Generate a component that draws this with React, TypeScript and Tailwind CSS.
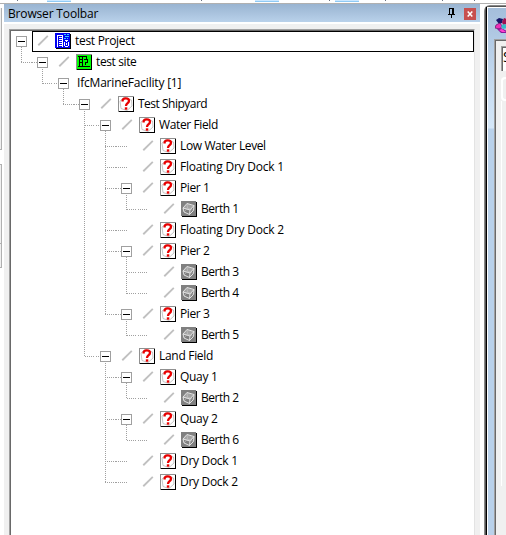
import React from "react";

type IconKind = "project" | "site" | "unknown" | "berth" | "none";

interface Item {
  label: string;
  depth: number;
  icon: IconKind;
  box?: boolean;
  track: string;
}

const T = "tracking-[-0.3px]";
const TIGHT = "tracking-[-0.5px]";
const SNUG = "tracking-[-0.38px]";
const WIDE = "tracking-[-0.22px]";

const items: Item[] = [
  { label: "test Project", depth: 0, icon: "project", box: true, track: T },
  { label: "test site", depth: 1, icon: "site", box: true, track: SNUG },
  { label: "IfcMarineFacility [1]", depth: 2, icon: "none", box: true, track: "tracking-[-0.2px]" },
  { label: "Test Shipyard", depth: 3, icon: "unknown", box: true, track: TIGHT },
  { label: "Water Field", depth: 4, icon: "unknown", box: true, track: SNUG },
  { label: "Low Water Level", depth: 5, icon: "unknown", track: SNUG },
  { label: "Floating Dry Dock 1", depth: 5, icon: "unknown", track: WIDE },
  { label: "Pier 1", depth: 5, icon: "unknown", box: true, track: SNUG },
  { label: "Berth 1", depth: 6, icon: "berth", track: TIGHT },
  { label: "Floating Dry Dock 2", depth: 5, icon: "unknown", track: WIDE },
  { label: "Pier 2", depth: 5, icon: "unknown", box: true, track: SNUG },
  { label: "Berth 3", depth: 6, icon: "berth", track: TIGHT },
  { label: "Berth 4", depth: 6, icon: "berth", track: TIGHT },
  { label: "Pier 3", depth: 5, icon: "unknown", box: true, track: SNUG },
  { label: "Berth 5", depth: 6, icon: "berth", track: TIGHT },
  { label: "Land Field", depth: 4, icon: "unknown", box: true, track: T },
  { label: "Quay 1", depth: 5, icon: "unknown", box: true, track: T },
  { label: "Berth 2", depth: 6, icon: "berth", track: TIGHT },
  { label: "Quay 2", depth: 5, icon: "unknown", box: true, track: T },
  { label: "Berth 6", depth: 6, icon: "berth", track: TIGHT },
  { label: "Dry Dock 1", depth: 5, icon: "unknown", track: T },
  { label: "Dry Dock 2", depth: 5, icon: "unknown", track: T },
];

// True when a later sibling of the node at this depth follows row i.
function continues(i: number, depth: number): boolean {
  for (let j = i + 1; j < items.length; j++) {
    if (items[j].depth < depth) return false;
    if (items[j].depth === depth) return true;
  }
  return false;
}

function Dots({ d, phase }: { d: string; phase: number }) {
  return <path d={d} stroke="#a0a0a0" strokeDasharray="1 1" strokeDashoffset={phase} fill="none" />;
}

function Guides({ index, item }: { index: number; item: Item }) {
  const phase = index % 2;
  const cells = [];
  for (let k = 0; k <= item.depth; k++) {
    const own = k === item.depth;
    const parent = k === item.depth - 1;
    const down = continues(index, k + 1);
    cells.push(
      <svg key={k} width="21" height="21" viewBox="0 0 21 21" className="shrink-0" shapeRendering="crispEdges">
        {!own && (parent || down) && <Dots d={down ? "M10.5 0V21" : "M10.5 0V11"} phase={phase} />}
        {parent && <Dots d="M10 10.5H21" phase={k % 2} />}
        {own && item.depth > 0 && <Dots d={item.box ? "M0 10.5H5" : "M0 10.5H11"} phase={(k + 1) % 2} />}
        {own && item.box && (
          <>
            <path d="M10.5 16V21" stroke="#a0a0a0" strokeDasharray="1 1" strokeDashoffset={phase} />
            <rect x="5.5" y="5.5" width="10" height="10" fill="#fff" stroke="#a0a0a0" />
            <path d="M7 10.5H14" stroke="#000" />
          </>
        )}
      </svg>,
    );
  }
  return <>{cells}</>;
}

function Slash() {
  return (
    <svg width="13" height="13" viewBox="0 0 13 13" className="ml-[5px] shrink-0">
      <path d="M1.300 10.200L10.800 .900" stroke="#c0c0c0" strokeWidth="1.900" />
    </svg>
  );
}

function NodeIcon({ kind }: { kind: IconKind }) {
  if (kind === "project")
    return (
      <svg width="16" height="16" viewBox="0 0 16 16" className="mb-px shrink-0" shapeRendering="crispEdges">
        <path fill="#000" d="M1 1h15v15H1z" />
        <path fill="#0000f0" d="M0 0h15v15H0z" />
        <path stroke="#fff" d="M2.500 2V14M7.500 2V14M2 2.500H8M4 4.500H7M4 6.500H7M4 8.500H7M4 10.500H7M4 12.500H7" />
        <path stroke="#35cfff" d="M9 1.500h2M12 1.500h2M10 3.500h4M9 5.500h2M12 5.500h1" />
        <path stroke="#fff" fill="none" d="M10 7.500H13M9.500 9V13M13.500 9V13M10 13.500H13M11 8.500H12" />
        <path fill="#fff" d="M11 10h1v2h-1z" />
      </svg>
    );
  if (kind === "site")
    return (
      <svg width="16" height="16" viewBox="0 0 16 16" className="mb-px shrink-0" shapeRendering="crispEdges">
        <path fill="#909090" d="M0 0h16v16H0z" />
        <path fill="#000" d="M1 15h14V1h1v15H1z" />
        <path fill="#00ff00" d="M1 1h14v14H1z" />
        <path stroke="#000" fill="none" d="M2 2.500H11M3.500 2V12M6.500 3V12M4 5.500H6M4 8.500H6M2 12.500H14M10.500 3V5" />
        <path stroke="#000" fill="none" d="M8 5.500H12M11.500 6V8M9 8.500H12M9.500 9V11" />
      </svg>
    );
  if (kind === "berth")
    return (
      <svg width="16" height="16" viewBox="0 0 16 16" className="mb-px shrink-0">
        <path fill="#000" d="M1 1h15v15H1z" shapeRendering="crispEdges" />
        <path fill="#808080" d="M0 0h15v15H0z" shapeRendering="crispEdges" />
        <path fill="#a4a4a4" d="M2 7L6 2.500L13 5L9 9Z" />
        <path stroke="#ececec" strokeWidth=".9" fill="none" d="M2 7L6 2.500L13 4.500L9 9ZM2 7L3 11L8.500 13.500L9 9M13 4.500L12.500 9.500L8.500 13.500" />
        <path stroke="#c8c8c8" strokeWidth=".6" fill="none" d="M6 2.500L6.500 7L3 11M6.500 7L12.500 9.500" />
      </svg>
    );
  return (
    <svg width="16" height="16" viewBox="0 0 16 16" className="mb-px shrink-0">
      <g shapeRendering="crispEdges">
        <path fill="#909090" d="M0 0h16v16H0z" />
        <path fill="#000" d="M1 15h14V1h1v15H1z" />
        <path fill="#fff" d="M1 1h14v14H1z" />
      </g>
      <path stroke="#b8b8b8" strokeWidth=".8" fill="none" d="M2 5L6 1.500L13.500 4L14 10L9 14.500L3 12.500Z" />
      <path stroke="#e80000" strokeWidth="2.300" fill="none" d="M4.600 5.500V4.300Q5 2.300 7.800 2.300Q11 2.300 11 4.800Q11 6.300 9.500 7.200Q8 8.200 8 10.100" />
      <path fill="#e80000" d="M6.800 11.300h2.500v2.400H6.800z" />
    </svg>
  );
}

function TreeRow({ item, index }: { item: Item; index: number }) {
  const body = (
    <>
      {item.icon !== "none" && (
        <>
          <Slash />
          <span className="w-[5px] shrink-0" />
          <NodeIcon kind={item.icon} />
        </>
      )}
      <span className={`mb-[2px] whitespace-pre ${item.icon === "none" ? "ml-[3px]" : "ml-[4px]"} ${item.track}`}>{item.label}</span>
    </>
  );
  return (
    <div className="flex h-[21px] shrink-0 items-center">
      <Guides index={index} item={item} />
      {index === 0 ? (
        <div className="flex h-[21px] w-[442px] items-center border border-black [&>svg:first-child]:ml-[4px]">{body}</div>
      ) : (
        body
      )}
    </div>
  );
}

function ToolbarEdge() {
  return (
    <div className="flex h-[3px] bg-white">
      <div className="ml-[17px] h-px w-px bg-gray-500" />
      <div className="ml-[29px] h-[2px] w-[24px] border-b border-[#8fcaf5] bg-[#cce8ff]" />
      <div className="ml-[130px] h-px w-px bg-gray-500" />
      <div className="ml-[53px] h-[2px] w-[24px] border-b border-[#8fcaf5] bg-[#cce8ff]" />
      <div className="ml-[50px] h-px w-px bg-gray-500" />
      <div className="ml-[5px] h-[2px] w-[24px] border-b border-[#8fcaf5] bg-[#cce8ff]" />
      <div className="ml-[26px] h-px w-px bg-gray-500" />
      <div className="ml-[56px] h-px w-px bg-gray-500" />
      <div className="ml-[31px] h-px w-px bg-gray-500" />
    </div>
  );
}

function LeftEdge() {
  return (
    <div className="flex w-1 shrink-0 flex-col bg-white">
      <div className="mt-1 h-[142px] w-[2px] border-r border-b border-[#b0b0b0] bg-[#f0f0f0]" />
      <div className="mt-[14px] h-[79px] w-[2px] border-t border-r border-[#b0b0b0] bg-[#f0f0f0]" />
      <div className="h-[25px] w-[2px] border-y border-r border-[#b0b0b0] bg-[#f0f0f0]" />
    </div>
  );
}

function SideWindow() {
  return (
    <div className="mt-px flex min-w-0 flex-1 rounded-tl-md border-t border-l border-[#888]">
      <div className="flex min-w-0 flex-1 rounded-tl border-t border-l border-[#555]">
        <div className="flex min-w-0 flex-1 border-l border-black">
          <div className="flex min-w-0 flex-1 flex-col border-t border-l border-white bg-[linear-gradient(#a4bedb_0px,#c4daf0_70px,#d5e7f8_120px,#b9d1ea_121px)] pl-[6px]">
            <div className="flex h-[31px] pt-[9px] pl-[1px]">
              <svg width="12" height="17" viewBox="0 0 12 17" className="shrink-0">
                <path d="M1 3L4 1L8 2L7 6L4 7Z" fill="#161667" />
                <path d="M7 5L9 1L12 2V7L8 8Z" fill="#a01050" />
                <path d="M1 8L5 6L7 9L5 12L0 11Z" fill="#ef30b8" stroke="#660d64" strokeWidth=".7" />
                <path d="M6 9L9 7L12 8V11L8 12Z" fill="#35bcc8" />
                <path d="M2 12L6 11L12 14V16L6 16Z" fill="#8b1798" />
                <path d="M4 13L7 12L11 15H7Z" fill="#ff40d0" />
              </svg>
            </div>
            <div className="flex flex-1 border-t border-l border-[#a0a0a0]">
              <div className="flex-1 border-t border-l border-[#696969] bg-[#f0f0f0] pt-[5px] pl-[5px]">
                <div className="h-[25px] overflow-hidden border-t border-l border-[#a0a0a0]">
                  <div className="h-6 border-t border-l border-[#696969] bg-white text-[14px] leading-[17px]">S</div>
                </div>
                <div className="mt-1.5 h-[24px] rounded-l border-2 border-r-0 border-white" />
                <div className="h-[385px] border-l border-white" />
              </div>
            </div>
          </div>
        </div>
      </div>
    </div>
  );
}

export default function App() {
  return (
    <div className="flex h-[535px] w-[506px] flex-col overflow-hidden bg-white font-['Open_Sans','Noto_Sans',sans-serif] text-[12px] leading-[16px] text-black">
      <ToolbarEdge />
      <div className="h-px shrink-0 bg-[#b0b0b0]" />
      <div className="flex min-h-0 flex-1">
        <LeftEdge />
        <div className="flex w-[476px] shrink-0 flex-col">
          <div className="flex h-[18px] shrink-0 items-center bg-linear-to-b from-[#99b4d1] to-[#b9d1ea] pr-[4px] pl-[4px]">
            <span className="mt-[2px] tracking-[-0.16px]">Browser Toolbar</span>
            <svg width="9" height="10" viewBox="0 0 9 10" className="ml-auto" shapeRendering="crispEdges">
              <path d="M2.500 0V6M2 .500H6M1 6.500H8M4.500 7V10" stroke="#000" fill="none" />
              <path d="M5 0h2v6H5z" fill="#000" />
            </svg>
            <div className="mt-[2px] ml-[8px] flex size-[12px] items-center justify-center bg-[#c75050]">
              <svg width="6" height="6" viewBox="0 0 6 6">
                <path d="M.700 .500L5.300 5.500M5.300 .500L.700 5.500" stroke="#fff" strokeWidth="1.500" />
              </svg>
            </div>
          </div>
          <div className="h-[2px] shrink-0 bg-white" />
          <div className="flex min-h-0 flex-1 bg-[#f0f0f0] pt-[5px] pr-[5px] pl-[5px]">
            <div className="flex flex-1 border-t border-r border-l border-[#a0a0a0] border-r-[#e3e3e3]">
              <div className="flex min-w-0 flex-1 flex-col border-t border-l border-[#696969] bg-white">
                {items.map((item, i) => (
                  <TreeRow key={item.label} item={item} index={i} />
                ))}
              </div>
            </div>
          </div>
        </div>
        <div className="w-1 shrink-0 bg-white" />
        <SideWindow />
      </div>
    </div>
  );
}
